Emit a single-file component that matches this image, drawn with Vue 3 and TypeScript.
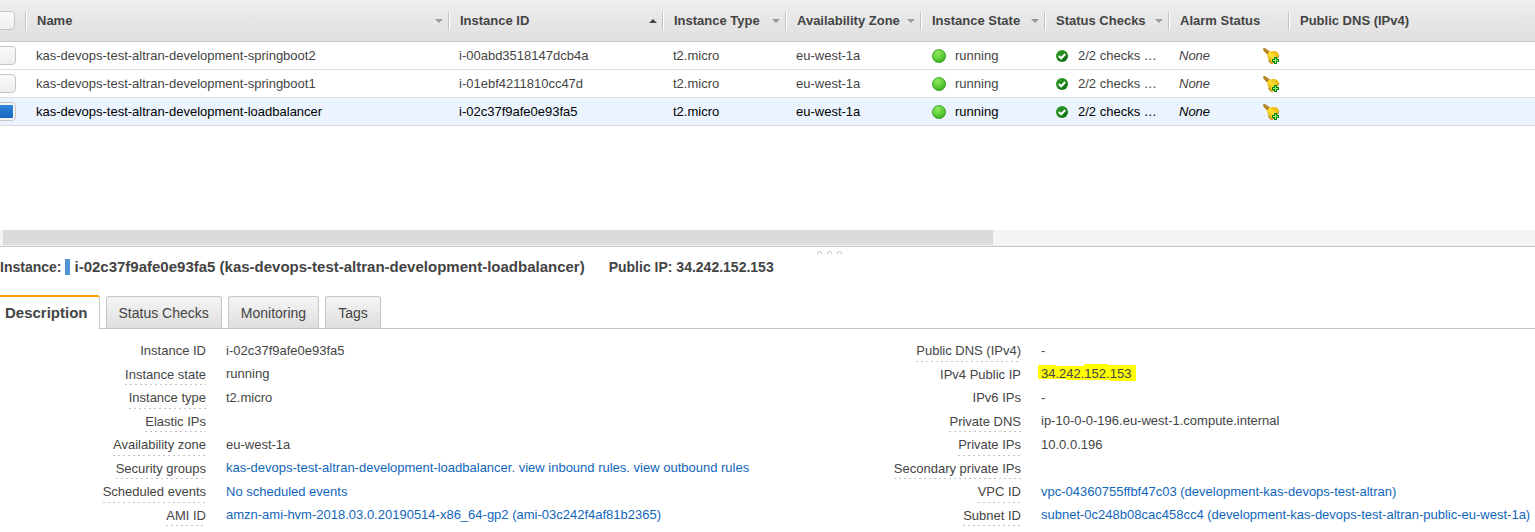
<script setup lang="ts">
import { ref } from 'vue'

interface Column {
  label: string
  cls: string
  sort?: 'down' | 'up'
}

interface Instance {
  name: string
  id: string
  selected: boolean
}

interface Detail {
  label: string
  links?: string[]
  value?: string
  plain?: boolean
  marked?: boolean
}

const columns: Column[] = [
  { label: 'Name', cls: 'c-name', sort: 'down' },
  { label: 'Instance ID', cls: 'c-id', sort: 'up' },
  { label: 'Instance Type', cls: 'c-type', sort: 'down' },
  { label: 'Availability Zone', cls: 'c-zone', sort: 'down' },
  { label: 'Instance State', cls: 'c-state', sort: 'down' },
  { label: 'Status Checks', cls: 'c-checks', sort: 'down' },
  { label: 'Alarm Status', cls: 'c-alarm' },
  { label: 'Public DNS (IPv4)', cls: 'c-dns' },
]

const allSelected = ref(false)

const instances = ref<Instance[]>([
  { name: 'kas-devops-test-altran-development-springboot2', id: 'i-00abd3518147dcb4a', selected: false },
  { name: 'kas-devops-test-altran-development-springboot1', id: 'i-01ebf4211810cc47d', selected: false },
  { name: 'kas-devops-test-altran-development-loadbalancer', id: 'i-02c37f9afe0e93fa5', selected: true },
])

const tabs = ['Description', 'Status Checks', 'Monitoring', 'Tags']
const activeTab = ref('Description')

const leftDetails: Detail[] = [
  { label: 'Instance ID', value: 'i-02c37f9afe0e93fa5', plain: true },
  { label: 'Instance state', value: 'running' },
  { label: 'Instance type', value: 't2.micro' },
  { label: 'Elastic IPs' },
  { label: 'Availability zone', value: 'eu-west-1a' },
  {
    label: 'Security groups',
    links: ['kas-devops-test-altran-development-loadbalancer', 'view inbound rules', 'view outbound rules'],
  },
  { label: 'Scheduled events', links: ['No scheduled events'] },
  { label: 'AMI ID', links: ['amzn-ami-hvm-2018.03.0.20190514-x86_64-gp2 (ami-03c242f4af81b2365)'] },
]

const rightDetails: Detail[] = [
  { label: 'Public DNS (IPv4)', value: '-' },
  { label: 'IPv4 Public IP', value: '34.242.152.153', plain: true, marked: true },
  { label: 'IPv6 IPs', value: '-', plain: true },
  { label: 'Private DNS', value: 'ip-10-0-0-196.eu-west-1.compute.internal' },
  { label: 'Private IPs', value: '10.0.0.196' },
  { label: 'Secondary private IPs' },
  { label: 'VPC ID', links: ['vpc-04360755ffbf47c03 (development-kas-devops-test-altran)'] },
  { label: 'Subnet ID', links: ['subnet-0c248b08cac458cc4 (development-kas-devops-test-altran-public-eu-west-1a)'] },
]

const sides = [leftDetails, rightDetails]
</script>

<template>
  <main class="console">
    <svg class="defs" width="0" height="0" aria-hidden="true">
      <defs>
        <radialGradient id="ball" cx="0.4" cy="0.3" r="0.75">
          <stop offset="0" stop-color="#8fe860" />
          <stop offset="0.6" stop-color="#5bcb35" />
          <stop offset="1" stop-color="#36a51e" />
        </radialGradient>
        <linearGradient id="seal" x1="0" y1="0" x2="1" y2="1">
          <stop offset="0" stop-color="#35a32b" />
          <stop offset="1" stop-color="#08680b" />
        </linearGradient>
        <linearGradient id="brass" x1="0" y1="1" x2="1" y2="0">
          <stop offset="0" stop-color="#c98e08" />
          <stop offset="0.5" stop-color="#ffe02e" />
          <stop offset="1" stop-color="#e0a500" />
        </linearGradient>
      </defs>
    </svg>

    <section class="list">
      <table>
        <colgroup>
          <col class="c-box" />
          <col v-for="c in columns" :key="c.cls" :class="c.cls" />
        </colgroup>
        <thead>
          <tr>
            <th class="box"><input v-model="allSelected" type="checkbox" aria-label="Select all instances" /></th>
            <th v-for="c in columns" :key="c.cls" scope="col">
              <div class="head">
                <span>{{ c.label }}</span>
                <button v-if="c.sort" type="button" :class="c.sort" :aria-label="'Sort by ' + c.label">
                  <svg width="8" height="4" viewBox="0 0 8 4">
                    <path :d="c.sort === 'up' ? 'M0 4L4 0L8 4Z' : 'M0 0H8L4 4Z'" fill="currentColor" />
                  </svg>
                </button>
              </div>
            </th>
          </tr>
        </thead>
        <tbody>
          <tr v-for="row in instances" :key="row.id" :class="{ selected: row.selected }">
            <td class="box"><input v-model="row.selected" type="checkbox" :aria-label="'Select ' + row.name" /></td>
            <td>{{ row.name }}</td>
            <td>{{ row.id }}</td>
            <td>t2.micro</td>
            <td>eu-west-1a</td>
            <td>
              <div class="cell state">
                <svg width="14" height="14" viewBox="0 0 14 14">
                  <circle cx="7" cy="7" r="6.6" fill="url(#ball)" stroke="#3d9d2b" stroke-width="0.8" />
                </svg>
                <span>running</span>
              </div>
            </td>
            <td>
              <div class="cell checks">
                <svg width="12" height="12" viewBox="0 0 12 12">
                  <circle cx="6" cy="6" r="6" fill="url(#seal)" />
                  <path d="M2.8 5.9L5.2 8.2L9.2 4" fill="none" stroke="#fff" stroke-width="2.1" />
                </svg>
                <span>2/2 checks …</span>
              </div>
            </td>
            <td>
              <div class="cell alarm">
                <em>None</em>
                <button type="button" :aria-label="'Add alarm to ' + row.name">
                  <svg width="17" height="16" viewBox="0 0 17 16">
                    <path d="M0 0.6L1.8 0L6.8 3.6L4.4 6.4L0.6 2.8Z" fill="#a66f12" />
                    <path d="M1.2 1.2L5.6 4.6" stroke="#d9a63c" stroke-width="1" />
                    <path d="M3.8 6.4L6.6 3.4L11.8 3Q15.4 3.8 16 7.4L13 12.5L9 15.6Q6.2 15.2 5.6 12Z" fill="url(#brass)" />
                    <path d="M5.6 12Q6.2 15.2 9 15.6L13 12.5L16 7.4" fill="none" stroke="#b98207" stroke-width="0.9" />
                    <path d="M11 9H14V11H16V14H14V16H11V14H9V11H11Z" fill="#078313" />
                    <path d="M12 10H13V12H15V13H13V15H12V13H10V12H12Z" fill="#92f578" />
                  </svg>
                </button>
              </div>
            </td>
            <td></td>
          </tr>
        </tbody>
      </table>
    </section>

    <div class="scroll"><div class="thumb"></div></div>

    <section class="details">
      <div class="grip" aria-hidden="true">
        <svg width="26" height="4" viewBox="0 0 26 4">
          <path
            d="M0.5 3V2Q0.5 0.5 2.5 0.5T4.5 2V3M10.5 3V2Q10.5 0.5 12.5 0.5T14.5 2V3M20.5 3V2Q20.5 0.5 22.5 0.5T24.5 2V3"
            fill="none"
            stroke="#c4c4c4"
          />
        </svg>
      </div>
      <h2>
        <span>Instance:</span>
        <i class="bar"></i>
        <span class="title">i-02c37f9afe0e93fa5 (kas-devops-test-altran-development-loadbalancer)</span>
        <span class="ip">Public IP: 34.242.152.153</span>
      </h2>
      <div class="tabs" role="tablist">
        <button
          v-for="t in tabs"
          :key="t"
          type="button"
          role="tab"
          :aria-selected="t === activeTab"
          :class="{ active: t === activeTab }"
          @click="activeTab = t"
        >
          {{ t }}
        </button>
      </div>
      <div class="sides">
        <dl v-for="(side, i) in sides" :key="i">
          <div v-for="d in side" :key="d.label" class="pair">
            <dt><span :class="{ hint: !d.plain }">{{ d.label }}</span></dt>
            <dd>
              <template v-if="d.links">
                <template v-for="(l, n) in d.links" :key="l"><span v-if="n" class="dot">. </span><a href="#">{{ l }}</a></template>
              </template>
              <span v-else-if="d.marked" class="marked">
                <svg viewBox="0 0 98 18" preserveAspectRatio="none" aria-hidden="true">
                  <path d="M0 1H18V2H46V0H70V1H98V17H72V16H28V15H0Z" fill="#ffff00" />
                </svg>
                <span>{{ d.value }}</span>
              </span>
              <template v-else>{{ d.value }}</template>
            </dd>
          </div>
        </dl>
      </div>
    </section>
  </main>
</template>

<style>
body {
  background: #fff;
}
</style>

<style scoped>
.console {
  font: 13px/18px "Liberation Sans", Arial, sans-serif;
  color: #444;
  overflow: hidden;
}
.defs {
  position: absolute;
}
button {
  font: inherit;
  color: inherit;
  border: 0;
  padding: 0;
  background: none;
  cursor: pointer;
}
svg {
  display: block;
  flex: none;
}
.list {
  min-height: 230px;
}
table {
  width: 100%;
  table-layout: fixed;
  border-collapse: separate;
  border-spacing: 0;
}
.c-box { width: 26px; }
.c-name { width: 423px; }
.c-id { width: 214px; }
.c-type { width: 123px; }
.c-zone { width: 135px; }
.c-state { width: 124px; }
.c-checks { width: 124px; }
.c-alarm { width: 120px; }
thead tr {
  background: linear-gradient(#eee, #dfdfdf);
}
th {
  height: 41px;
  padding: 0;
  border-bottom: 1px solid #c8c8c8;
  text-align: left;
}
.head {
  display: flex;
  align-items: center;
  justify-content: space-between;
  height: 18px;
  padding-left: 10px;
  padding-right: 6px;
  border-left: 1px solid #fff;
  box-shadow: -1px 0 #c4c4c4;
  white-space: nowrap;
}
.head button {
  color: #999;
}
.head .up {
  color: #444;
}
td {
  height: 27px;
  padding: 0 0 0 10px;
  border-bottom: 1px solid #ddd;
  white-space: nowrap;
}
.selected td {
  background: #eaf3fe;
  color: #000;
}
.box {
  padding: 0;
}
.box input {
  appearance: none;
  display: block;
  box-sizing: border-box;
  width: 20px;
  height: 19px;
  margin: 0 0 0 -4px;
  border: 1px solid #c6c6c6;
  border-radius: 4px;
  background: linear-gradient(#fafafa, #eee);
}
th.box input {
  margin-left: -5px;
}
.box input:checked {
  background: linear-gradient(#2f86dc, #1565bd) content-box, #f4f4f4;
  padding: 2px;
}
.cell {
  display: flex;
  align-items: center;
}
.state {
  gap: 9px;
  padding-left: 1px;
}
.checks {
  gap: 10px;
  padding-left: 1px;
}
.alarm {
  justify-content: space-between;
  padding-right: 9px;
}
.scroll {
  height: 16px;
  padding-left: 3px;
  background: #f4f4f4;
  border-bottom: 1px solid #c6c6c6;
}
.thumb {
  width: 64.6%;
  height: 15px;
  background: #dbdbdb;
}
.grip {
  display: flex;
  justify-content: center;
  padding: 4px 0 0 124px;
}
h2 {
  display: flex;
  align-items: center;
  margin: 0;
  padding: 3px 0 19px;
  font-size: 14px;
  line-height: 18px;
  white-space: nowrap;
}
.bar {
  width: 5px;
  height: 16px;
  margin: 0 4px;
  background: #5296d5;
}
.title {
  font-size: 15px;
}
.ip {
  margin-left: 24px;
}
.tabs {
  display: flex;
  align-items: flex-end;
  gap: 6px;
  border-bottom: 1px solid #c6c6c6;
}
.tabs button {
  height: 32px;
  padding: 0 12px;
  border: 1px solid #c6c6c6;
  border-bottom: 0;
  border-radius: 3px 3px 0 0;
  background: linear-gradient(#f5f5f5, #dedede);
  font-size: 14px;
}
.tabs .active {
  height: 34px;
  margin-bottom: -1px;
  padding: 0 11px 0 5px;
  border-top: 2px solid #f90;
  border-left: 0;
  border-radius: 0 3px 0 0;
  background: #fff;
  font-size: 15px;
  font-weight: bold;
}
.sides {
  display: grid;
  grid-template-columns: 815fr 720fr;
  padding-top: 12px;
}
dl {
  margin: 0;
}
.pair {
  display: flex;
  gap: 20px;
  height: 23px;
  white-space: nowrap;
}
.pair:nth-child(even) {
  height: 24px;
}
dt {
  width: 206px;
  text-align: right;
}
dt span {
  display: inline-block;
  box-sizing: border-box;
  height: 21px;
  line-height: 20px;
}
.pair:nth-child(even) dt span {
  padding-top: 1px;
}
.hint {
  background: repeating-linear-gradient(90deg, #c4c4c4 0 2px, transparent 2px 5px) left bottom / 100% 1px no-repeat;
}
dd {
  margin: 0;
  line-height: 20px;
}
a {
  color: #1166bb;
  text-decoration: none;
}
.dot {
  color: #1166bb;
}
.marked {
  display: block;
  position: relative;
}
.marked svg {
  position: absolute;
  top: 0;
  left: -3px;
  width: 98px;
  height: 18px;
}
.marked span {
  position: relative;
}
</style>
